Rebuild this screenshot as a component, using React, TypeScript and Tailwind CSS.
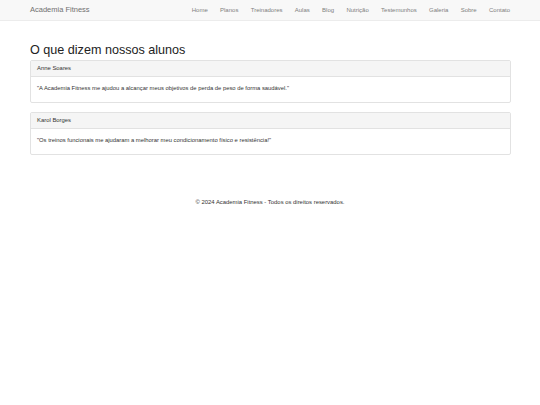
import React from 'react';

const links = ['Home', 'Planos', 'Treinadores', 'Aulas', 'Blog', 'Nutrição', 'Testemunhos', 'Galeria', 'Sobre', 'Contato'];

const testimonials = [
  { name: 'Anne Soares', text: '"A Academia Fitness me ajudou a alcançar meus objetivos de perda de peso de forma saudável."' },
  { name: 'Karol Borges', text: '"Os treinos funcionais me ajudaram a melhorar meu condicionamento físico e resistência!"' },
];

export default function App() {
  return (
    <div className="min-h-screen bg-white text-[#212529]" style={{ fontFamily: '"Liberation Sans", Arial, sans-serif' }}>
      {/* Navbar */}
      <nav className="h-[21px] bg-[#f8f8f8] border-b border-[#ececec]">
        <div className="h-full px-[30px] flex items-center justify-between">
          <span className="text-[7.5px] text-[#707070]">Academia Fitness</span>
          <ul className="flex items-center gap-[12.3px]">
            {links.map((l) => (
              <li key={l} className="text-[6px] text-[#808080]">{l}</li>
            ))}
          </ul>
        </div>
      </nav>

      <main className="px-[30px] pt-[22px]">
        <h2 className="text-[12.6px] leading-[15px] mb-[2px] text-[#222]">O que dizem nossos alunos</h2>
        <div className="flex flex-col gap-[9px] w-[481px]">
          {testimonials.map((t) => (
            <div key={t.name} className="border border-[#e2e2e2] rounded-[2px]">
              <div className="h-[16px] bg-[#f5f5f5] border-b border-[#e2e2e2] px-[6px] flex items-center text-[5.9px] text-[#333]">
                {t.name}
              </div>
              <div className="h-[25px] px-[6px] pt-[6.5px] text-[5.85px] leading-[9px] text-[#333]">
                <p>{t.text}</p>
              </div>
            </div>
          ))}
        </div>
      </main>

      <footer className="pt-[43px] text-center text-[5.9px] text-[#333]">
        © 2024 Academia Fitness - Todos os direitos reservados.
      </footer>
    </div>
  );
}
